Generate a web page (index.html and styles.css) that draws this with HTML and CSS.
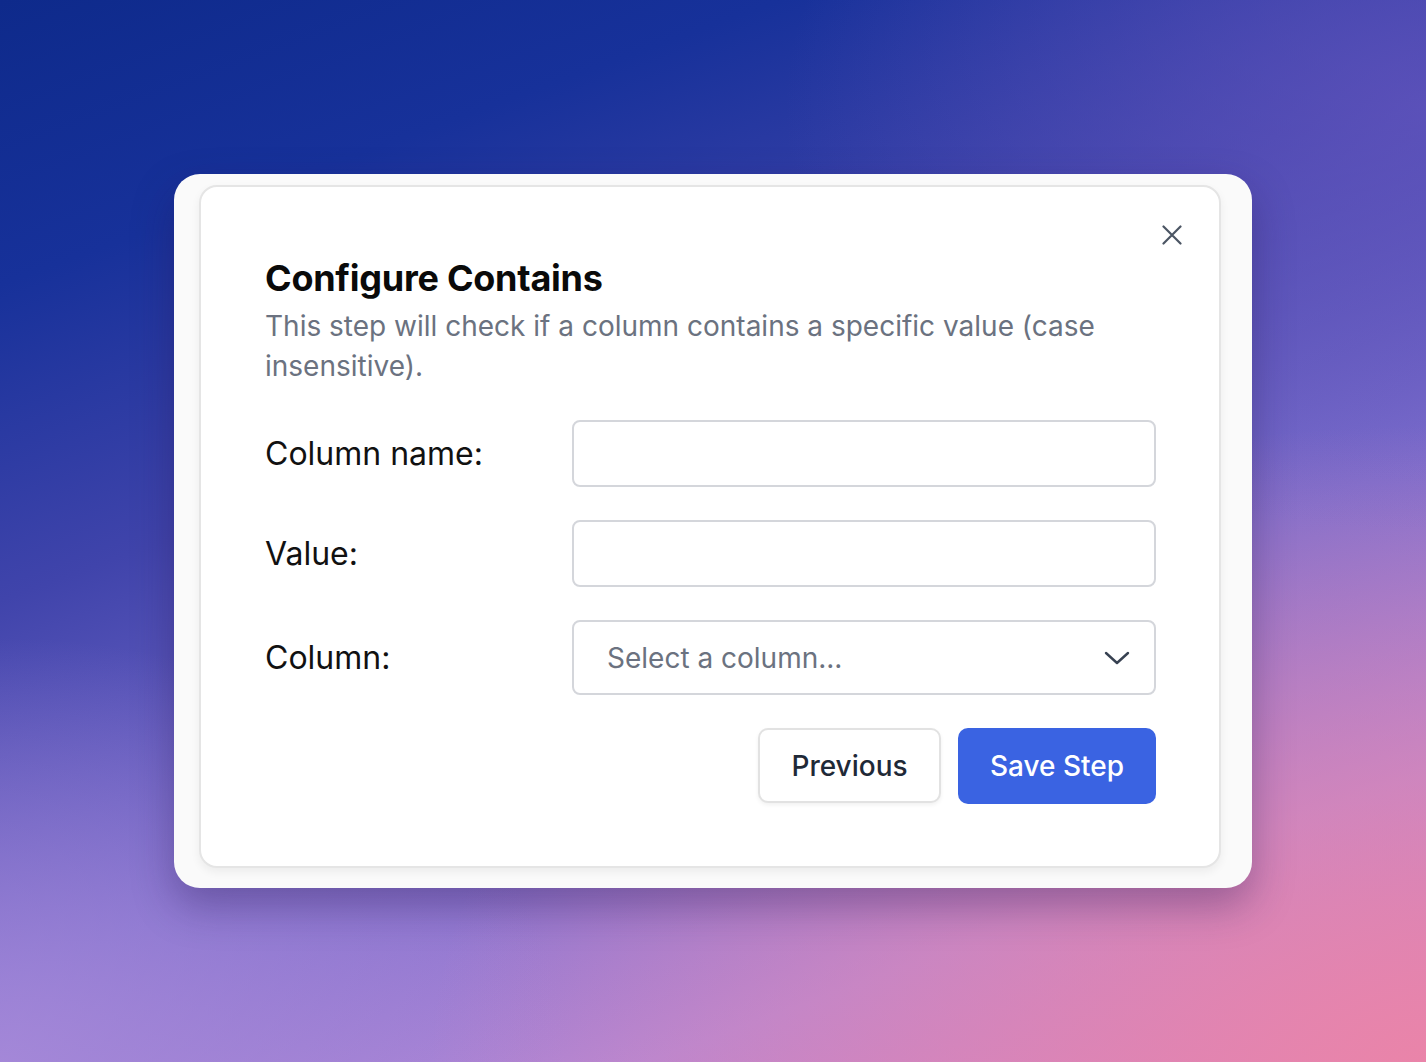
FILE: index.html
```html
<!DOCTYPE html>
<html lang="en">
<head>
<meta charset="utf-8">
<title>Configure Contains</title>
<link rel="stylesheet" href="styles.css">
</head>
<body>
<div class="stage">
  <div class="frame">
    <div class="card">
      <button class="close" aria-label="Close">
        <svg viewBox="0 0 20 20" width="20" height="20"><path d="M1.5 1.5 L18.5 18.5 M18.5 1.5 L1.5 18.5" stroke="#4b5563" stroke-width="2.2" stroke-linecap="round" fill="none"/></svg>
      </button>
      <h1 class="title">Configure Contains</h1>
      <p class="desc">This step will check if a column contains a specific value (case insensitive).</p>
      <div class="form">
        <label class="label">Column name:</label>
        <div class="input"></div>
        <label class="label">Value:</label>
        <div class="input"></div>
        <label class="label">Column:</label>
        <div class="select">
          <span class="placeholder">Select a column...</span>
          <svg class="chev" viewBox="0 0 26 16" width="26" height="16"><path d="M2 3 L13 13 L24 3" stroke="#374151" stroke-width="2.4" stroke-linecap="round" stroke-linejoin="round" fill="none"/></svg>
        </div>
      </div>
      <div class="actions">
        <button class="btn btn-secondary">Previous</button>
        <button class="btn btn-primary">Save Step</button>
      </div>
    </div>
  </div>
</div>
</body>
</html>
```

FILE: styles.css
```css
html, body {
  margin: 0;
  padding: 0;
  height: 100%;
}
body {
  font-family: Inter, "Noto Sans", sans-serif;
  background:
    radial-gradient(ellipse 70% 60% at 100% 100%, rgba(236,132,166,0.9) 0%, rgba(236,132,166,0) 100%),
    radial-gradient(ellipse 40% 40% at 0% 100%, rgba(170,140,218,0.8) 0%, rgba(170,140,218,0) 100%),
    radial-gradient(ellipse 45% 40% at 100% 10%, rgba(100,85,190,0.7) 0%, rgba(100,85,190,0) 100%),
    linear-gradient(160deg, #0e2a8b 0%, #17319a 18%, #4044ab 38%, #7d6ecd 62%, #b287d6 82%, #d584c4 100%);
  overflow: hidden;
}
.stage {
  width: 100%;
  height: 100%;
  display: flex;
  align-items: center;
  justify-content: center;
}
.frame {
  width: 1078px;
  height: 714px;
  box-sizing: border-box;
  padding: 11px 31px 20px 25px;
  background: #fafafa;
  border-radius: 26px;
  box-shadow: 0 18px 40px rgba(40, 20, 80, 0.35);
}
.card {
  position: relative;
  height: 100%;
  box-sizing: border-box;
  background: #ffffff;
  border: 2px solid #e5e5e5;
  border-radius: 18px;
  box-shadow: 0 4px 10px rgba(0,0,0,0.06);
  padding: 64px 63px 0 64px;
}
.close {
  position: absolute;
  top: 38px;
  right: 37px;
  width: 20px;
  height: 20px;
  padding: 0;
  border: 0;
  background: none;
  display: flex;
}
.title {
  margin: 5px 0 0;
  font-size: 36px;
  line-height: 44px;
  font-weight: 700;
  color: #0a0a0a;
  letter-spacing: -0.25px;
}
.desc {
  margin: 6px 0 0;
  font-size: 28px;
  line-height: 40px;
  color: #6b7280;
  font-weight: 400;
}
.form {
  margin-top: 34px;
  display: grid;
  grid-template-columns: 307px 1fr;
  row-gap: 33px;
  align-items: center;
}
.label {
  font-size: 32px;
  color: #111111;
}
.input {
  height: 67px;
  box-sizing: border-box;
  border: 2px solid #d4d6db;
  border-radius: 8px;
  background: #fff;
}
.select {
  height: 75px;
  box-sizing: border-box;
  border: 2px solid #d4d6db;
  border-radius: 8px;
  background: #fff;
  display: flex;
  align-items: center;
  justify-content: space-between;
  padding: 0 24px 0 33px;
}
.placeholder {
  font-size: 28px;
  color: #6b7280;
}
.actions {
  margin-top: 33px;
  display: flex;
  justify-content: flex-end;
  gap: 17px;
}
.btn {
  font-family: Inter, "Noto Sans", sans-serif;
  font-size: 28px;
  font-weight: 500;
  border-radius: 10px;
  cursor: pointer;
  box-sizing: border-box;
}
.btn-secondary {
  width: 183px;
  height: 75px;
  background: #fff;
  color: #1f2937;
  border: 2px solid #e2e2e2;
  box-shadow: 0 2px 4px rgba(0,0,0,0.06);
}
.btn-primary {
  width: 198px;
  height: 76px;
  background: #3a63e2;
  color: #ffffff;
  border: 0;
}
```
